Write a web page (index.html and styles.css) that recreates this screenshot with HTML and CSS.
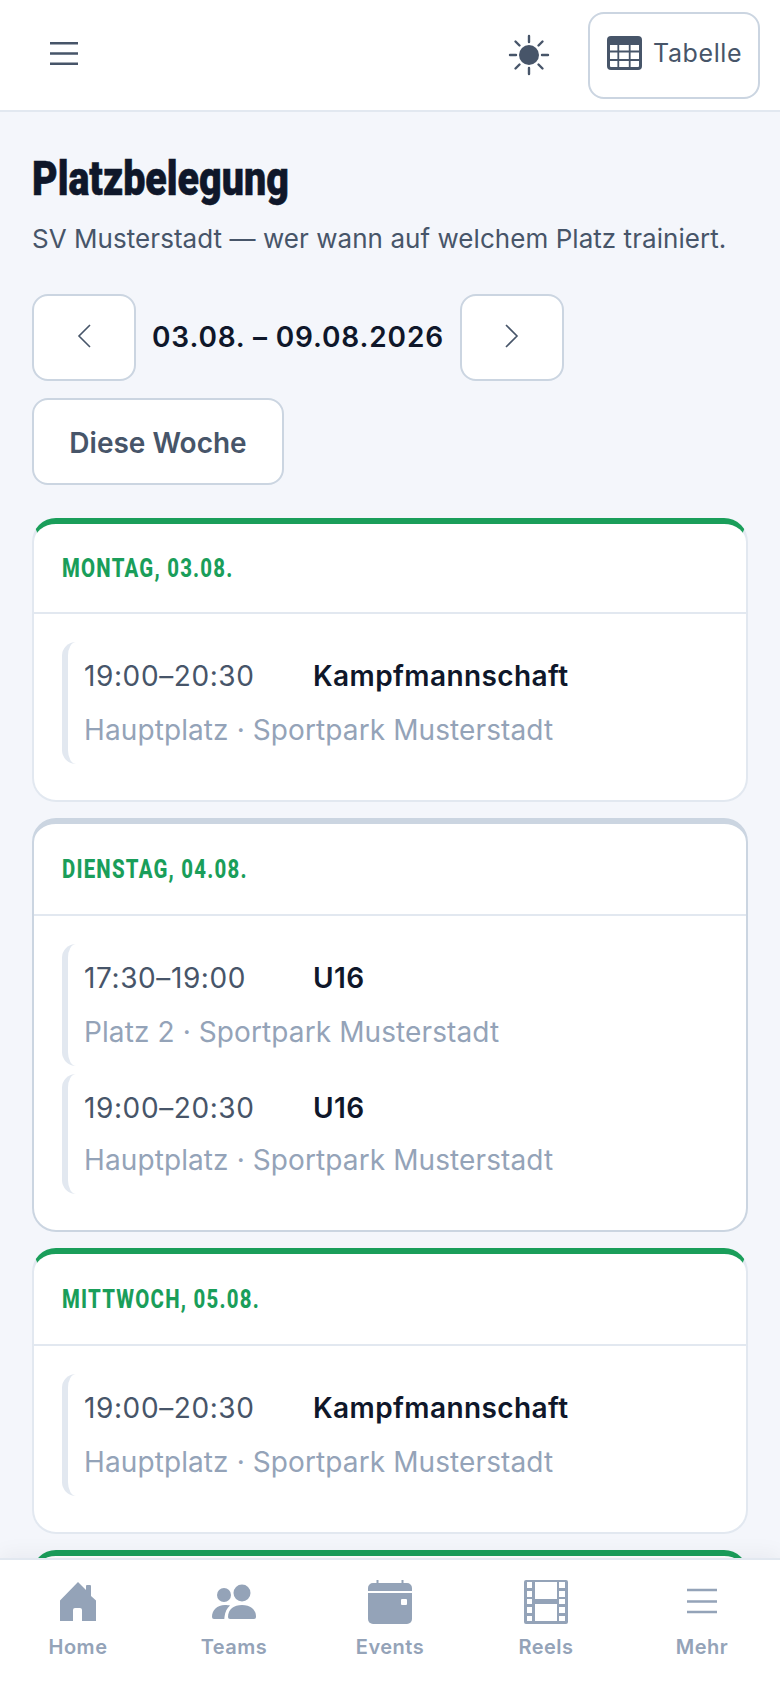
FILE: index.html
```html
<!DOCTYPE html>
<html lang="de">
<head>
    <meta charset="UTF-8">
    <title>Platzbelegung</title>
    <link rel="stylesheet" href="styles.css">
</head>
<body>

    <header class="topbar">
        <button class="menu-btn" type="button" aria-label="Menü">
            <svg width="28" height="23" viewBox="0 0 28 23"><path d="M0 1.2h28M0 11.5h28M0 21.8h28" stroke="#475569" stroke-width="2.4"/></svg>
        </button>
        <div class="topbar-right">
            <svg class="sun" width="42" height="42" viewBox="0 0 42 42">
                <circle cx="21" cy="21" r="10" fill="#475569"/>
                <path d="M21 2v6M21 34v6M2 21h6M34 21h6M7.500 7.500l4 4M30.500 30.500l4 4M7.500 34.500l4-4M30.500 11.500l4-4" stroke="#475569" stroke-width="2.4" stroke-linecap="round"/>
            </svg>
            <button class="table-btn" type="button">
                <svg width="35" height="34" viewBox="0 0 35 34">
                    <path d="M4 0h27a4 4 0 0 1 4 4v26a4 4 0 0 1-4 4H4a4 4 0 0 1-4-4V4a4 4 0 0 1 4-4z" fill="#475569"/>
                    <path d="M3 9h7.400v5.600H3zM12.200 9h9.600v5.600h-9.600zM23.600 9H32v5.600h-8.400zM3 16.400h7.400v6.700H3zM12.200 16.400h9.600v6.700h-9.600zM23.600 16.400H32v6.700h-8.400zM3 24.900h7.400V31H4a1 1 0 0 1-1-1zM12.200 24.900h9.600V31h-9.600zM23.600 24.900H32V30a1 1 0 0 1-1 1h-7.400z" fill="#fff"/>
                </svg>
                Tabelle
            </button>
        </div>
    </header>

    <main class="page">
        <h1><span>Platzbelegung</span></h1>
        <p class="intro">SV Musterstadt — wer wann auf welchem Platz trainiert.</p>

        <div class="week-nav">
            <button class="nav-btn" type="button" aria-label="Zurück">
                <svg width="14" height="24" viewBox="0 0 14 24"><path d="M13 1 2 12l11 11" fill="none" stroke="#475569" stroke-width="1.6"/></svg>
            </button>
            <span class="week-label">03.08. – 09.08.2026</span>
            <button class="nav-btn" type="button" aria-label="Weiter">
                <svg width="14" height="24" viewBox="0 0 14 24"><path d="m1 1 11 11L1 23" fill="none" stroke="#475569" stroke-width="1.6"/></svg>
            </button>
            <button class="today-btn" type="button">Diese Woche</button>
        </div>

        <section class="day day-active">
            <h2><span>Montag, 03.08.</span></h2>
            <div class="slots">
                <div class="slot">
                    <div class="slot-main"><span class="slot-time">19:00–20:30</span><span class="slot-team">Kampfmannschaft</span></div>
                    <div class="slot-place">Hauptplatz · Sportpark Musterstadt</div>
                </div>
            </div>
        </section>

        <section class="day day-today">
            <h2><span>Dienstag, 04.08.</span></h2>
            <div class="slots">
                <div class="slot">
                    <div class="slot-main"><span class="slot-time">17:30–19:00</span><span class="slot-team">U16</span></div>
                    <div class="slot-place">Platz 2 · Sportpark Musterstadt</div>
                </div>
                <div class="slot">
                    <div class="slot-main"><span class="slot-time">19:00–20:30</span><span class="slot-team">U16</span></div>
                    <div class="slot-place">Hauptplatz · Sportpark Musterstadt</div>
                </div>
            </div>
        </section>

        <section class="day day-active">
            <h2><span>Mittwoch, 05.08.</span></h2>
            <div class="slots">
                <div class="slot">
                    <div class="slot-main"><span class="slot-time">19:00–20:30</span><span class="slot-team">Kampfmannschaft</span></div>
                    <div class="slot-place">Hauptplatz · Sportpark Musterstadt</div>
                </div>
            </div>
        </section>

        <section class="day day-active day-next"></section>
    </main>

    <nav class="tabbar">
        <a class="tab">
            <svg width="44" height="44" viewBox="0 0 44 44"><path d="M22 2 30 10V6a1 1 0 0 1 1-1h3a1 1 0 0 1 1 1v10L40 20.500V41H26V30a2 2 0 0 0-2-2h-5a2 2 0 0 0-2 2V41H4V20.500z" fill="#94a3b8"/></svg>
            Home
        </a>
        <a class="tab">
            <svg width="44" height="44" viewBox="0 0 44 44">
                <circle cx="12" cy="15" r="7" fill="#94a3b8"/><circle cx="30" cy="13" r="8.500" fill="#94a3b8"/>
                <path d="M0 37c0-7 5-12 13-12 2 0 4 .2 5 .5-3 2.500-5 6.500-5.500 11.500l-.2 2H2a2 2 0 0 1-2-2z" fill="#94a3b8"/>
                <path d="M16 37c0-8 6-12 14-12s14 4 14 12a2 2 0 0 1-2 2H18a2 2 0 0 1-2-2z" fill="#94a3b8"/>
            </svg>
            Teams
        </a>
        <a class="tab">
            <svg width="44" height="44" viewBox="0 0 44 44">
                <path d="M8.500 0h2v3h23V0h2v3H39a5 5 0 0 1 5 5v3H0V8a5 5 0 0 1 5-5h3.500z" fill="#94a3b8"/>
                <path d="M0 13h44v26a5 5 0 0 1-5 5H5a5 5 0 0 1-5-5z" fill="#94a3b8"/>
                <rect x="33" y="19" width="6" height="6" rx="1" fill="#fff"/>
            </svg>
            Events
        </a>
        <a class="tab">
            <svg width="44" height="44" viewBox="0 0 44 44">
                <path fill-rule="evenodd" fill="#94a3b8" d="M2 0h40a2 2 0 0 1 2 2v40a2 2 0 0 1-2 2H2a2 2 0 0 1-2-2V2a2 2 0 0 1 2-2zM3 2v6h5V2zM35 2v6h6V2zM3 11v6h5v-6zM35 11v6h6v-6zM3 19v5h5v-5zM35 19v5h6v-5zM3 27v6h5v-6zM35 27v6h6v-6zM3 36v5h5v-5zM35 36v5h6v-5zM11 2v17h22V2zM11 24v17h22V24z"/>
            </svg>
            Reels
        </a>
        <a class="tab">
            <svg width="44" height="44" viewBox="0 0 44 44"><path d="M7 10h30M7 21.500h30M7 32h30" stroke="#94a3b8" stroke-width="2.400"/></svg>
            Mehr
        </a>
    </nav>

</body>
</html>
```

FILE: styles.css
```css
/* Platzbelegung */

:root {
    --ink: #0f172a;
    --slate: #475569;
    --muted: #94a3b8;
    --line: #e2e8f0;
    --line-strong: #cbd5e1;
    --green: #1a9e5a;
    --page-bg: #f4f6fb;
}

* {
    box-sizing: border-box;
}

html, body {
    height: 1688px;
    overflow: hidden;
}

body {
    margin: 0;
    position: relative;
    font-family: Inter, "Noto Sans", sans-serif;
    background-color: var(--page-bg);
    color: var(--ink);
}

button {
    font-family: inherit;
    background-color: #fff;
    border: 2px solid var(--line-strong);
    border-radius: 16px;
    cursor: pointer;
    padding: 0;
}

.topbar {
    height: 112px;
    background-color: #fff;
    border-bottom: 2px solid var(--line);
    display: flex;
    align-items: center;
    justify-content: space-between;
    padding: 0 20px 0 50px;
}

.menu-btn {
    border: none;
    background: none;
    display: flex;
    margin-bottom: 3px;
}

.topbar-right {
    display: flex;
    align-items: center;
    gap: 38px;
}

.table-btn {
    width: 172px;
    height: 87px;
    display: flex;
    align-items: center;
    gap: 11px;
    padding: 0 0 5px 17px;
    font-size: 25px;
    letter-spacing: 0.6px;
    color: var(--slate);
}

.page {
    padding: 41px 32px 0;
}

h1 {
    margin: 0;
    font-family: Roboto, sans-serif;
    font-size: 48px;
    font-weight: 900;
    line-height: 52px;
    -webkit-text-stroke: 0.6px var(--ink);
}

h1 span {
    display: inline-block;
    transform: scaleX(0.82);
    transform-origin: left;
}

.intro {
    margin: 16px 0 0;
    font-size: 26px;
    line-height: 36px;
    letter-spacing: 0.05px;
    color: var(--slate);
    white-space: nowrap;
}

.week-nav {
    margin-top: 37px;
    display: flex;
    flex-wrap: wrap;
    align-items: center;
    gap: 17px 16px;
}

.nav-btn {
    width: 104px;
    height: 87px;
    display: flex;
    align-items: center;
    justify-content: center;
    padding-bottom: 3px;
}

.week-label {
    width: 292px;
    font-size: 28px;
    font-weight: 600;
    letter-spacing: 0.85px;
    white-space: nowrap;
    padding-bottom: 2px;
}

.today-btn {
    width: 252px;
    height: 87px;
    font-size: 28px;
    font-weight: 600;
    padding-top: 2px;
    color: var(--slate);
}

.day {
    margin-top: 16px;
    background-color: #fff;
    border: 2px solid var(--line);
    border-top-width: 6px;
    border-radius: 24px;
}

.week-nav + .day {
    margin-top: 33px;
}

.day-active {
    border-top-color: var(--green);
}

.day-today {
    border-color: var(--line-strong);
}

.day-next {
    height: 120px;
}

.day h2 {
    margin: 0;
    height: 90px;
    padding-left: 28px;
    display: flex;
    align-items: center;
    border-bottom: 2px solid var(--line);
    font-family: Roboto, sans-serif;
    font-size: 25px;
    font-weight: 800;
    letter-spacing: 1.5px;
    text-transform: uppercase;
    color: var(--green);
}

.day + .day h2 {
    height: 92px;
}

.day h2 span {
    transform: scaleX(0.815);
    transform-origin: left;
}

.slots {
    padding: 28px 28px 36px;
    display: flex;
    flex-direction: column;
    gap: 8px;
}

.slot {
    height: 122px;
    padding: 14px 0 0 16px;
    border-left: 6px solid var(--line);
    border-radius: 14px;
}

.slot + .slot {
    height: 120px;
}

.slot-main {
    display: flex;
    font-size: 28px;
    line-height: 40px;
}

.slot-time {
    width: 229px;
    letter-spacing: 0.6px;
    color: var(--slate);
}

.slot-team {
    font-weight: 600;
    letter-spacing: 0.4px;
}

.slot-place {
    margin-top: 14px;
    font-size: 28px;
    line-height: 40px;
    letter-spacing: 0.1px;
    color: var(--muted);
}

.slot + .slot .slot-place {
    margin-top: 12px;
}

/* Нижняя панель */
.tabbar {
    position: absolute;
    left: 0;
    right: 0;
    bottom: 0;
    height: 130px;
    background-color: #fff;
    border-top: 2px solid var(--line);
    box-shadow: 0 -4px 20px rgba(15, 23, 42, 0.05);
    display: grid;
    grid-template-columns: repeat(5, 1fr);
    padding-top: 20px;
}

.tab {
    display: flex;
    flex-direction: column;
    align-items: center;
    gap: 11px;
    font-size: 20px;
    font-weight: 600;
    letter-spacing: 0.5px;
    color: var(--muted);
}
```
